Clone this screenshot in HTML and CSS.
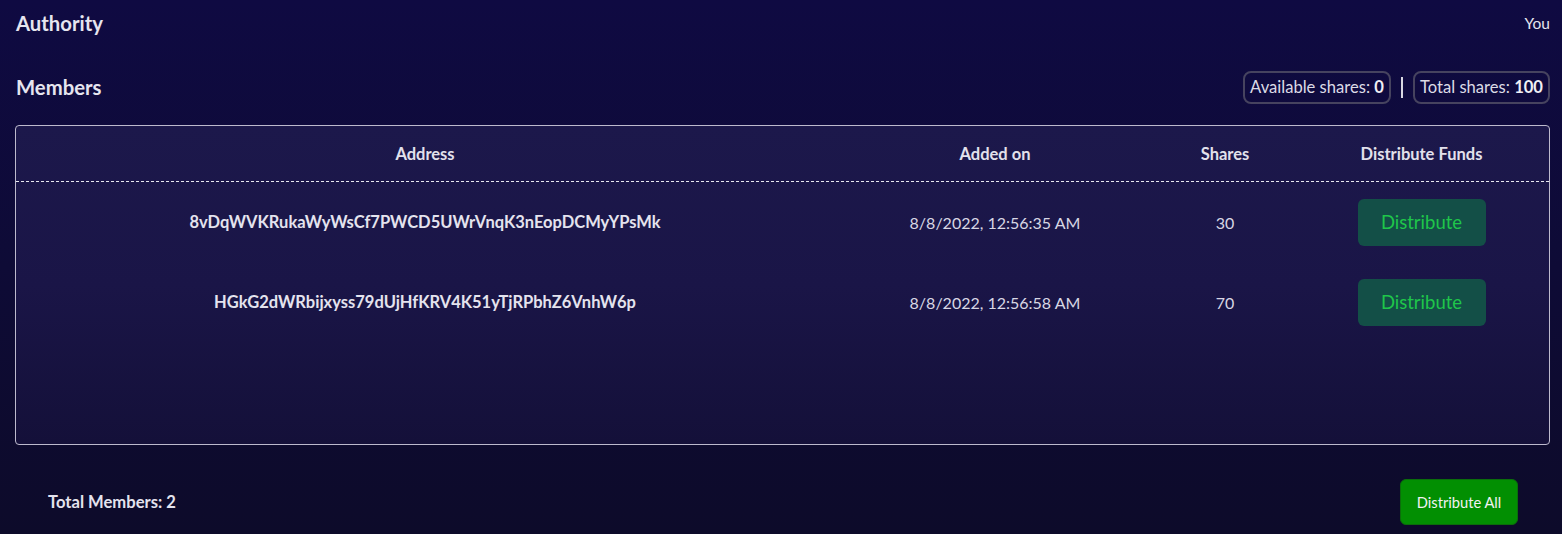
FILE: index.html
```html
<!DOCTYPE html>
<html lang="en">
<head>
<meta charset="utf-8">
<title>Members</title>
<link rel="stylesheet" href="styles.css">
</head>
<body>
<main class="page">
  <div class="row-authority">
    <h2 class="title">Authority</h2>
    <span class="you">You</span>
  </div>
  <div class="row-members">
    <h2 class="title">Members</h2>
    <div class="shares">
      <span class="badge">Available shares: <b>0</b></span>
      <span class="sep"></span>
      <span class="badge">Total shares: <b>100</b></span>
    </div>
  </div>
  <section class="table">
    <div class="thead">
      <div class="c c-addr">Address</div>
      <div class="c c-date">Added on</div>
      <div class="c c-shares">Shares</div>
      <div class="c c-dist">Distribute Funds</div>
    </div>
    <div class="tr">
      <div class="c c-addr addr">8vDqWVKRukaWyWsCf7PWCD5UWrVnqK3nEopDCMyYPsMk</div>
      <div class="c c-date">8/8/2022, 12:56:35 AM</div>
      <div class="c c-shares">30</div>
      <div class="c c-dist"><button class="btn-dist">Distribute</button></div>
    </div>
    <div class="tr">
      <div class="c c-addr addr">HGkG2dWRbijxyss79dUjHfKRV4K51yTjRPbhZ6VnhW6p</div>
      <div class="c c-date">8/8/2022, 12:56:58 AM</div>
      <div class="c c-shares">70</div>
      <div class="c c-dist"><button class="btn-dist">Distribute</button></div>
    </div>
  </section>
  <footer class="footer">
    <span class="total">Total Members: 2</span>
    <button class="btn-all">Distribute All</button>
  </footer>
</main>
</body>
</html>
```
FILE: styles.css
```css
* { box-sizing: border-box; }
html, body { margin: 0; height: 100%; }
body {
  background: linear-gradient(180deg, #0f0a42 0%, #0e0b36 50%, #0d0b2a 100%);
  color: #e4e3ee;
  font-family: "Lato", "Noto Sans", sans-serif;
  overflow: hidden;
}
.page {
  padding: 0 12px 0 15px;
}
.row-authority {
  height: 46px;
  display: flex;
  align-items: center;
  justify-content: space-between;
}
.title {
  margin: 0;
  padding-left: 1px;
  font-size: 20.3px;
  font-weight: 700;
  color: #e6e5ef;
}
.you {
  font-size: 15.5px;
  color: #e6e5ef;
}
.row-members {
  height: 79px;
  display: flex;
  align-items: center;
  justify-content: space-between;
  padding-top: 3px;
}
.shares {
  display: flex;
  align-items: center;
  gap: 10px;
}
.badge {
  height: 33px;
  display: inline-flex;
  align-items: center;
  padding: 0 5px;
  border: 2px solid #46435f;
  border-radius: 8px;
  font-size: 16.6px;
  color: #dcdbe6;
  white-space: pre;
}
.badge b { font-weight: 700; color: #f0f0f5; }
.sep {
  width: 2px;
  height: 21px;
  background: #d8d7e2;
}
.table {
  height: 320px;
  border: 1px solid #bdbacd;
  border-radius: 4px;
  background: linear-gradient(180deg, #1c184b 0%, #1a1547 50%, #141039 100%);
}
.thead, .tr {
  display: grid;
  grid-template-columns: 818px 322px 138px 1fr;
  align-items: center;
}
.thead {
  height: 56px;
  border-bottom: 1px dashed #e8e8f0;
  font-size: 16.5px;
  font-weight: 700;
  color: #e2e1ec;
}
.tr {
  height: 80px;
  font-size: 16px;
  color: #d8d7e4;
}
.c { text-align: center; }
.addr { font-size: 16.5px; font-weight: 700; color: #e4e3ee; }
.btn-dist {
  width: 128px;
  height: 47px;
  border: none;
  border-radius: 6px;
  background: #134f47;
  color: #1fc64a;
  font-family: inherit;
  font-size: 18.5px;
}
.footer {
  margin-top: 34px;
  height: 46px;
  display: flex;
  align-items: center;
  justify-content: space-between;
  padding: 0 32px 0 33px;
}
.total {
  font-size: 16.6px;
  font-weight: 700;
  color: #e4e3ee;
}
.btn-all {
  width: 118px;
  height: 46px;
  border: 1px solid #0b6e0b;
  border-radius: 6px;
  background: #028f02;
  color: #f2f2f2;
  font-family: inherit;
  font-size: 14.7px;
}
```
